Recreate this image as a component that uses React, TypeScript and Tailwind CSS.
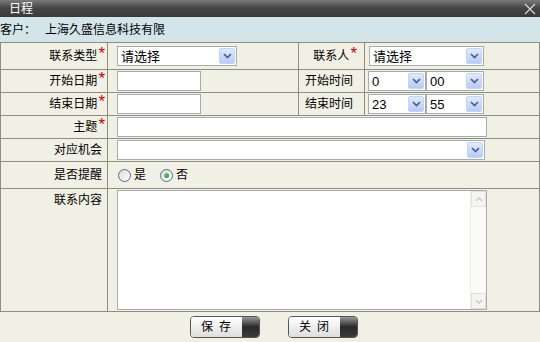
import React from 'react';

const FONT = { fontFamily: '"Liberation Sans", "Noto Sans CJK SC", sans-serif' };

const Star = () => (
  <span className="relative -top-[3px] ml-px text-[17px] leading-none text-[#cc0000]">*</span>
);

const Chevron = () => (
  <svg width="9" height="6" viewBox="0 0 9 6">
    <path d="M1 1 L4.5 4.5 L8 1" stroke="#4d6185" strokeWidth="1.7" fill="none" />
  </svg>
);

const Select = ({ value, className }: { value: string; className: string }) => (
  <div className={`flex h-[20px] items-center border border-[#a5acb2] bg-white ${className}`}>
    <span className="flex-1 pl-[3px] text-[13px] leading-none text-black">{value}</span>
    <span className="mr-px flex h-[16px] w-[16px] items-center justify-center rounded-[2px] border border-[#c3d3fd] bg-gradient-to-b from-[#e1eafe] to-[#b6cbf6]">
      <Chevron />
    </span>
  </div>
);

const Label = ({ text, star, pr }: { text: string; star?: boolean; pr: string }) => (
  <div className={`flex items-center justify-end border-r border-b border-[#8e8e80] text-[12px] text-black ${pr}`}>
    <span className="leading-none">{text}</span>
    {star && <Star />}
  </div>
);

const Cell = ({ children, className = '' }: { children?: React.ReactNode; className?: string }) => (
  <div className={`flex items-center border-r border-b border-[#8e8e80] ${className}`}>{children}</div>
);

const Radio = ({ checked }: { checked?: boolean }) => (
  <span className="flex h-[13px] w-[13px] items-center justify-center rounded-full border border-[#4a6f97] bg-gradient-to-br from-[#dcdcd6] to-white">
    {checked && <span className="h-[5px] w-[5px] rounded-full bg-gradient-to-br from-[#7fd17f] to-[#1f8f1f]" />}
  </span>
);

const Button = ({ text }: { text: string }) => (
  <div className="flex h-[22px] w-[70px] overflow-hidden rounded-[4px] border border-[#555]">
    <div className="flex flex-1 items-center justify-center bg-gradient-to-b from-white to-[#dedede] text-[12px] tracking-[6px] text-black">
      <span className="pl-[6px] leading-none">{text}</span>
    </div>
    <div className="w-[17px] bg-gradient-to-b from-[#9a9a9a] via-[#2a2a2a] to-[#3a3a3a]" />
  </div>
);

export default function App() {
  return (
    <div className="h-[342px] w-[540px] overflow-hidden bg-[#f0f0e5]" style={FONT}>
      {/* title bar */}
      <div className="flex h-[17px] items-center justify-between bg-gradient-to-b from-[#7a7a7a] via-[#444] to-[#3a3a3a] pl-[9px] pr-[4px]">
        <span className="text-[12px] leading-none text-white">日程</span>
        <svg width="12" height="12" viewBox="0 0 12 12">
          <path d="M1 1 L11 11 M11 1 L1 11" stroke="#d8d8d8" strokeWidth="1.2" />
        </svg>
      </div>

      {/* customer bar */}
      <div className="flex h-[25px] items-center bg-[#d4e5ea] text-[12px] leading-none text-black">
        <span className="w-[45px]">客户：</span>
        <span>上海久盛信息科技有限</span>
      </div>

      {/* form grid */}
      <div className="grid grid-cols-[107px_191px_66px_175px] grid-rows-[27px_23px_23px_23px_23px_27px_123px] border-t border-l border-[#8e8e80]">
        <Label text="联系类型" star pr="pr-[2px]" />
        <Cell className="pl-[9px]">
          <Select value="请选择" className="w-[120px]" />
        </Cell>
        <Label text="联系人" star pr="pr-[7px]" />
        <Cell className="pl-[4px]">
          <Select value="请选择" className="w-[115px]" />
        </Cell>

        <Label text="开始日期" star pr="pr-[2px]" />
        <Cell className="pl-[9px]">
          <div className="h-[20px] w-[84px] border border-[#a5acb2] bg-white" />
        </Cell>
        <Label text="开始时间" pr="pr-[11px]" />
        <Cell className="pl-[3px]">
          <Select value="0" className="w-[58px]" />
          <Select value="00" className="w-[58px]" />
        </Cell>

        <Label text="结束日期" star pr="pr-[2px]" />
        <Cell className="pl-[9px]">
          <div className="h-[20px] w-[84px] border border-[#a5acb2] bg-white" />
        </Cell>
        <Label text="结束时间" pr="pr-[11px]" />
        <Cell className="pl-[3px]">
          <Select value="23" className="w-[58px]" />
          <Select value="55" className="w-[58px]" />
        </Cell>

        <Label text="主题" star pr="pr-[2px]" />
        <Cell className="col-span-3 pl-[9px]">
          <div className="h-[20px] w-[370px] border border-[#a5acb2] bg-white" />
        </Cell>

        <Label text="对应机会" pr="pr-[5px]" />
        <Cell className="col-span-3 pl-[9px]">
          <Select value="" className="w-[368px]" />
        </Cell>

        <Label text="是否提醒" pr="pr-[5px]" />
        <Cell className="col-span-3 gap-[3px] pl-[10px] text-[12px] leading-none text-black">
          <Radio />
          <span>是</span>
          <span className="w-[8px]" />
          <Radio checked />
          <span>否</span>
        </Cell>

        <div className="flex items-start justify-end border-r border-b border-[#8e8e80] pt-[5px] pr-[5px] text-[12px] leading-none text-black">
          联系内容
        </div>
        <Cell className="col-span-3 items-start pt-[1px] pl-[9px]">
          <div className="flex h-[120px] w-[370px] border border-[#a5acb2] bg-white">
            <div className="flex-1" />
            <div className="flex w-[16px] flex-col justify-between border-l border-[#eeeeea] bg-[#fafaf8]">
              <div className="flex h-[16px] items-center justify-center border border-[#e2e2dc] bg-[#f4f4f0]">
                <svg width="8" height="5" viewBox="0 0 8 5">
                  <path d="M1 4 L4 1 L7 4" stroke="#c8c8c0" strokeWidth="1.4" fill="none" />
                </svg>
              </div>
              <div className="flex h-[16px] items-center justify-center border border-[#e2e2dc] bg-[#f4f4f0]">
                <svg width="8" height="5" viewBox="0 0 8 5">
                  <path d="M1 1 L4 4 L7 1" stroke="#c8c8c0" strokeWidth="1.4" fill="none" />
                </svg>
              </div>
            </div>
          </div>
        </Cell>
      </div>

      {/* buttons */}
      <div className="flex h-[30px] items-center justify-center gap-[28px] pl-[7px]">
        <Button text="保存" />
        <Button text="关闭" />
      </div>
    </div>
  );
}
